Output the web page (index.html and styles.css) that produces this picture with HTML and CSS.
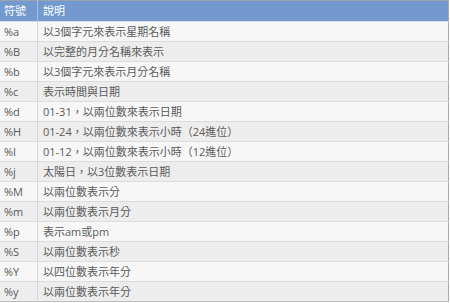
FILE: index.html
```html
<!DOCTYPE html>
<html lang="zh-Hant-TW">
<head>
<meta charset="utf-8">
<link rel="stylesheet" href="styles.css">
</head>
<body>
<table class="fmt">
  <thead>
    <tr><th class="c1">符號</th><th class="c2">說明</th></tr>
  </thead>
  <tbody>
    <tr><td class="c1">%a</td><td class="c2">以3個字元來表示星期名稱</td></tr>
    <tr><td class="c1">%B</td><td class="c2">以完整的月分名稱來表示</td></tr>
    <tr><td class="c1">%b</td><td class="c2">以3個字元來表示月分名稱</td></tr>
    <tr><td class="c1">%c</td><td class="c2">表示時間與日期</td></tr>
    <tr><td class="c1">%d</td><td class="c2">01-31，以兩位數來表示日期</td></tr>
    <tr><td class="c1">%H</td><td class="c2">01-24，以兩位數來表示小時（24進位）</td></tr>
    <tr><td class="c1">%I</td><td class="c2">01-12，以兩位數來表示小時（12進位）</td></tr>
    <tr><td class="c1">%j</td><td class="c2">太陽日，以3位數表示日期</td></tr>
    <tr><td class="c1">%M</td><td class="c2">以兩位數表示分</td></tr>
    <tr><td class="c1">%m</td><td class="c2">以兩位數表示月分</td></tr>
    <tr><td class="c1">%p</td><td class="c2">表示am或pm</td></tr>
    <tr><td class="c1">%S</td><td class="c2">以兩位數表示秒</td></tr>
    <tr><td class="c1">%Y</td><td class="c2">以四位數表示年分</td></tr>
    <tr><td class="c1">%y</td><td class="c2">以兩位數表示年分</td></tr>
  </tbody>
</table>
</body>
</html>
```
FILE: styles.css
```css
html, body {
  margin: 0;
  padding: 0;
  background: #ffffff;
}
.fmt {
  border-collapse: collapse;
  width: 449px;
  font-family: "Open Sans", "Noto Sans CJK TC", sans-serif;
  font-size: 11px;
  color: #5a5a5a;
  border-top: 1px solid #9aa4b0;
  border-right: 1px solid #a8a8a8;
  border-bottom: 1px solid #bdbdbd;
}
.fmt th, .fmt td {
  height: 19px;
  padding: 0 0 0 4px;
  text-align: left;
  font-weight: normal;
  line-height: 19px;
  white-space: nowrap;
}
.fmt th {
  background: #7399cf;
  color: #ffffff;
  height: 20px;
  line-height: 20px;
}
.fmt th.c1 {
  border-right: 1px solid #a9c0e2;
}
.fmt td {
  border-top: 1px solid #dcdcdc;
}
.fmt td.c1 {
  border-right: 1px solid #d6d6d6;
}
.fmt .c1 {
  width: 33px;
}
.fmt .c2 {
  padding-left: 5px;
}
.fmt tbody tr:nth-child(odd) td {
  background: #f7f7f7;
}
.fmt tbody tr:nth-child(even) td {
  background: #ededed;
}
```
